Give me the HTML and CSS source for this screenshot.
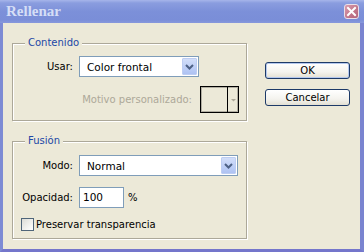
FILE: index.html
```html
<!DOCTYPE html>
<html>
<head>
<meta charset="utf-8">
<link rel="stylesheet" href="styles.css">
</head>
<body>
<div class="window">
  <div class="titlebar">
    <span class="title">Rellenar</span>
    <span class="close">
      <svg width="13" height="13" viewBox="0 0 13 13"><path d="M3 3 L10 10 M10 3 L3 10" stroke="#fff" stroke-width="2" stroke-linecap="square"/></svg>
    </span>
  </div>
  <div class="content">
    <div class="groups">
      <div class="group g1">
        <span class="legend">Contenido</span>
        <div class="row">
          <span class="label">Usar:</span>
          <div class="select s-usar">
            <span class="value">Color frontal</span>
            <span class="drop"><svg width="15" height="19" viewBox="0 0 15 19"><path d="M4 8 L7.5 11.5 L11 8" fill="none" stroke="#4d6185" stroke-width="2"/></svg></span>
          </div>
        </div>
        <div class="row row-motivo">
          <span class="label-dis">Motivo personalizado:</span>
          <div class="swatch">
            <span class="swatch-main"></span>
            <span class="swatch-arrow"><svg width="9" height="6" viewBox="0 0 9 6"><path d="M2 2 L7 2 L4.5 4.5 Z" fill="#aca899"/></svg></span>
          </div>
        </div>
      </div>
      <div class="group g2">
        <span class="legend">Fusión</span>
        <div class="row">
          <span class="label">Modo:</span>
          <div class="select s-modo">
            <span class="value">Normal</span>
            <span class="drop"><svg width="15" height="19" viewBox="0 0 15 19"><path d="M4 8 L7.5 11.5 L11 8" fill="none" stroke="#4d6185" stroke-width="2"/></svg></span>
          </div>
        </div>
        <div class="row row-op">
          <span class="label">Opacidad:</span>
          <div class="input">100</div>
          <span class="pct">%</span>
        </div>
        <div class="row row-check">
          <span class="checkbox"></span>
          <span class="check-label">Preservar transparencia</span>
        </div>
      </div>
    </div>
    <div class="buttons">
      <div class="btn default">OK</div>
      <div class="btn">Cancelar</div>
    </div>
  </div>
</div>
</body>
</html>
```
FILE: styles.css
```css
* { box-sizing: border-box; }
html, body { margin: 0; padding: 0; }
body {
  width: 364px;
  height: 252px;
  overflow: hidden;
  font-family: "DejaVu Sans", sans-serif;
  font-size: 10px;
  color: #000;
}
.window {
  width: 364px;
  height: 252px;
  display: flex;
  flex-direction: column;
  background: #ece9d8;
  border-left: 3px solid #7d8bd4;
  border-right: 4px solid #7a84d0;
  border-bottom: 3px solid #7476cb;
}
.titlebar {
  height: 23px;
  margin: 0 -4px 0 -3px;
  display: flex;
  align-items: center;
  justify-content: space-between;
  padding: 0 5px 0 6px;
  background: linear-gradient(#a6b5ea 0, #8a9ddf 3px, #7c90d9 50%, #7a8ed8 85%, #8798dc 100%);
}
.title {
  font-family: "Liberation Serif", serif;
  font-weight: bold;
  font-size: 15px;
  color: #d5def6;
  line-height: 23px;
}
.close {
  width: 15px;
  height: 15px;
  border: 1px solid #eadfe8;
  border-radius: 3px;
  background: linear-gradient(135deg, #d99cae, #c07489 60%, #b4667c);
  display: flex;
  align-items: center;
  justify-content: center;
}
.content {
  display: flex;
  align-items: flex-start;
  gap: 18px;
  padding: 20px 0 0 9px;
}
.groups {
  display: flex;
  flex-direction: column;
  gap: 20px;
  width: 235px;
}
.group {
  position: relative;
  border: 1px solid #aca899;
  box-shadow: 1px 1px 0 #fff, inset 1px 1px 0 #fff;
  display: flex;
  flex-direction: column;
}
.g1 { height: 78px; padding: 12px 7px 0 0; gap: 9px; }
.g2 { height: 98px; padding: 13px 7px 0 0; }
.legend {
  position: absolute;
  top: -8px;
  left: 12px;
  padding: 0 3px;
  line-height: 13px;
  background: #ece9d8;
  color: #2147a6;
}
.row {
  display: flex;
  align-items: center;
}
.label {
  width: 60px;
  margin-right: 6px;
  text-align: right;
  white-space: nowrap;
}
.select {
  height: 21px;
  border: 1px solid #7f9db9;
  background: #fff;
  display: flex;
  align-items: center;
  justify-content: space-between;
  padding: 1px;
}
.s-usar { width: 120px; }
.s-modo { width: 159px; }
.value {
  padding-left: 6px;
  font-size: 10.5px;
}
.drop {
  width: 15px;
  height: 17px;
  border: 1px solid #bdcdf2;
  border-radius: 1px;
  background: linear-gradient(#d2def9, #b9cbf5 70%, #aec2f2);
  display: flex;
  align-items: center;
  justify-content: center;
  overflow: hidden;
}
.drop svg { flex: none; }
.row-motivo {
  justify-content: flex-end;
  padding-right: 0;
}
.label-dis {
  color: #aca899;
  margin-right: 8px;
  white-space: nowrap;
}
.swatch {
  width: 39px;
  height: 27px;
  border: 1px solid #000;
  box-shadow: inset 0 0 0 1px rgba(0,0,0,0.25);
  display: flex;
}
.swatch-main {
  width: 27px;
  border-right: 1px solid #000;
}
.swatch-arrow {
  flex: 1;
  display: flex;
  align-items: center;
  justify-content: center;
}
.row-op { margin-top: 11px; }
.input {
  width: 45px;
  height: 21px;
  border: 1px solid #7f9db9;
  background: #fff;
  padding-left: 3px;
  line-height: 19px;
  font-size: 10.5px;
}
.pct { margin-left: 4px; }
.row-check {
  margin-top: 10px;
  padding-left: 8px;
}
.checkbox {
  width: 13px;
  height: 13px;
  border: 1px solid #4f6579;
  background: linear-gradient(135deg, #dcdcd6, #f6f6f3 70%, #fff);
  margin-right: 2px;
}
.check-label { white-space: nowrap; }
.buttons {
  display: flex;
  flex-direction: column;
  gap: 10px;
  padding-top: 19px;
}
.btn {
  width: 85px;
  height: 17px;
  border: 1px solid #1d3a68;
  border-radius: 3px;
  background: linear-gradient(#ffffff, #f4f3ee 60%, #e3e0d3);
  display: flex;
  align-items: center;
  justify-content: center;
  font-size: 10px;
}
.btn.default {
  box-shadow: inset 0 0 0 1px #b4c8ee;
}
```
